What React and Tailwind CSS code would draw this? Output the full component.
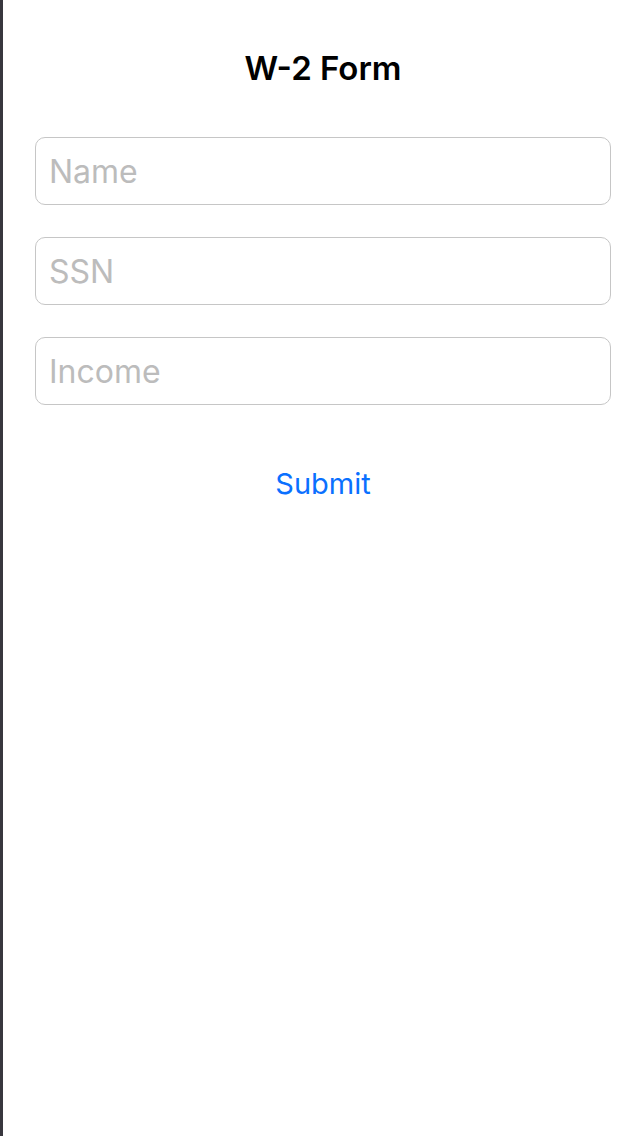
const fields = [
  { id: "name", label: "Name" },
  { id: "ssn", label: "SSN" },
  { id: "income", label: "Income" },
];

function Field({ id, label }) {
  return (
    <input
      id={id}
      name={id}
      type="text"
      placeholder={label}
      aria-label={label}
      className="h-[68px] w-full rounded-[10px] border border-[#c6c6c6] bg-white px-[13px] text-[32px] text-black outline-none placeholder:text-[#bcbcbc]"
    />
  );
}

export default function App() {
  return (
    <main className="min-h-screen border-l-3 border-[#38373e] bg-white pr-[31px] pl-8 pt-11 font-['Inter',sans-serif]">
      <h1 className="text-center text-[33px] leading-12 font-semibold text-black">W-2 Form</h1>
      <form className="mt-[45px] flex flex-col gap-8" onSubmit={(e) => e.preventDefault()}>
        {fields.map((field) => (
          <Field key={field.id} {...field} />
        ))}
        <button type="submit" className="mt-[27px] self-center text-[29px] leading-10 text-[#0a70ff]">
          Submit
        </button>
      </form>
    </main>
  );
}
